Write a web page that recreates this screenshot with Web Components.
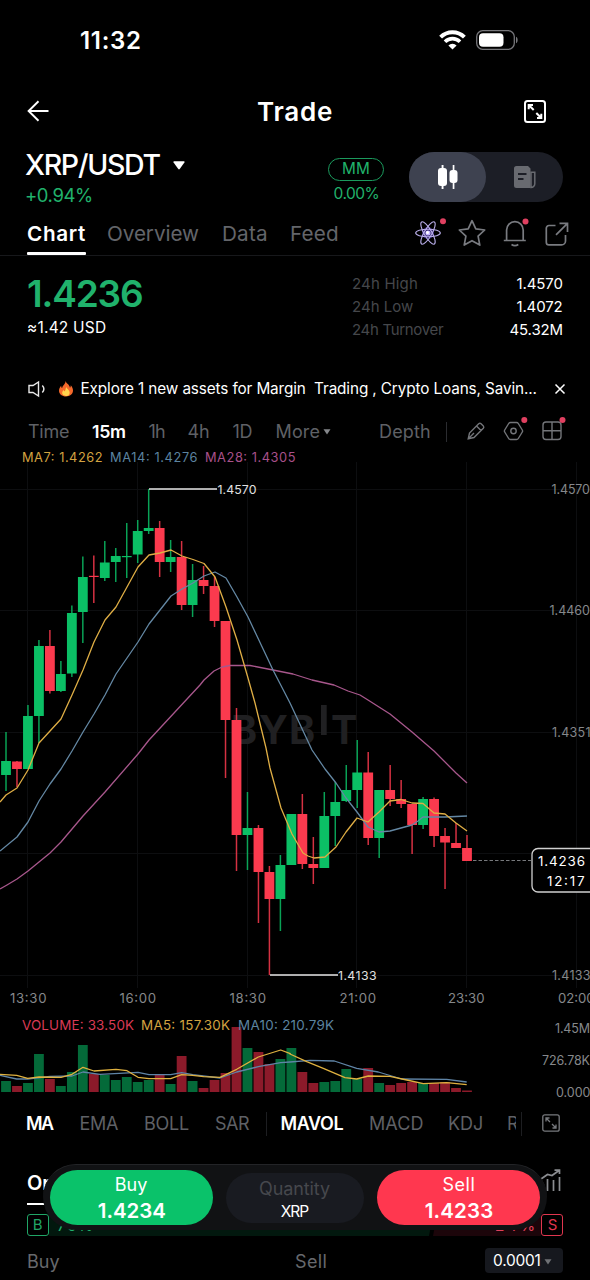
<!DOCTYPE html>
<html lang="en">
<head>
<meta charset="utf-8">
<title>Trade</title>
<style>
html,body{margin:0;background:#000;color:#fff;font-family:Inter,"Liberation Sans",sans-serif;overflow:hidden}
</style>
</head>
<body>
<trade-app></trade-app>
<script>
const BASE = `*{box-sizing:border-box}svg{display:block;flex:none;overflow:visible}
.row{display:flex;align-items:center}.sp{flex:1}`;
function define(name, css, html, after) {
  const t = document.createElement('template');
  t.innerHTML = `<style>${BASE}:host{display:block}${css}</style>${html}`;
  customElements.define(name, class extends HTMLElement {
    connectedCallback() {
      if (this.shadowRoot) return;
      this.attachShadow({mode: 'open'}).append(t.content.cloneNode(true));
      if (after) after(this.shadowRoot, this);
    }
  });
}

/* Label whose glyphs are tracked so that the ink fills the width w; g is the gap before it. */
const pen = document.createElement('canvas').getContext('2d');
customElements.define('ui-text', class extends HTMLElement {
  connectedCallback() {
    if (this.shadowRoot) return;
    const a = (n, d) => this.getAttribute(n) || d;
    const size = a('s', 15), wt = a('wt', 400), w = +a('w', 0), text = this.textContent;
    pen.font = `${wt} ${size}px Inter, "Liberation Sans", sans-serif`;
    const m = pen.measureText(text);
    const ink = m.actualBoundingBoxLeft + m.actualBoundingBoxRight;
    const ls = text.length > 1 ? (w - ink) / (text.length - 1) : 0;
    this.attachShadow({mode: 'open'}).innerHTML =
      `<style>:host{display:block;flex:none;width:${w}px;margin-left:${a('g', 0)}px;color:${a('c', 'inherit')};
      font-size:${size}px;font-weight:${wt};line-height:1.2;white-space:pre}
      span{display:block;width:max-content;margin-left:${m.actualBoundingBoxLeft}px;letter-spacing:${ls}px}</style><span><slot></slot></span>`;
  }
});

define('status-bar', `:host{height:81px}.row{height:81px;padding:0 72px 0 81px}`, `
<div class="row"><ui-text style="padding-top:2px" s="24" wt="600" w="59">11:32</ui-text><span class="sp"></span>
<svg width="27" height="20" viewBox="0 0 27 20" style="margin-right:10px;margin-top:-2px">
<path d="M1.6 7.2a16.8 16.8 0 0 1 23.8 0" fill="none" stroke="#fff" stroke-width="4"/>
<path d="M6 11.7a10.6 10.6 0 0 1 15 0" fill="none" stroke="#fff" stroke-width="3.6"/>
<path d="M9.4 15.4a5.8 5.8 0 0 1 8.2 0L13.5 19.6z" fill="#fff"/></svg>
<svg style="margin-top:-2px" width="42" height="20" viewBox="0 0 42 20"><rect x=".7" y=".7" width="37.6" height="18.6" rx="6" fill="none" stroke="#77777b" stroke-width="1.3"/>
<rect x="3" y="3.2" width="24.500" height="13.600" rx="4" fill="#fff"/><path d="M40 6.700c2.200.8 2.200 5.800 0 6.600z" fill="#77777b"/></svg></div>`);

define('page-header', `.row{height:61px;padding:0 44px 0 27px}`, `
<div class="row"><svg style="margin-top:-1px" width="22" height="22" viewBox="0 0 22 22" fill="none" stroke="#fff" stroke-width="1.900"><path d="M1.500 11H21.500M11.500 1.200 1.600 11l9.900 9.800"/></svg>
<ui-text g="209" s="26" wt="600" w="74">Trade</ui-text><span class="sp"></span>
<svg width="22" height="23" viewBox="0 0 22 23" fill="none" stroke="#fff" stroke-width="2"><rect x="1" y="1" width="20" height="21" rx="2.500"/>
<path d="M4.700 9.300V5h4.300M4.700 5l5 5M17.300 13.700V18H13M17.300 18l-5-5"/></svg></div>`);

define('view-toggle', `:host{width:154px;height:50px;border-radius:25px;background:#1c1e26;display:flex}
div{width:77px;height:50px;display:grid;place-items:center}.on{background:#3e4250;border-radius:25px}`, `
<div class="on"><svg width="20" height="24" viewBox="0 0 20 24" fill="#fff"><rect y="3" width="9" height="18" rx="3"/><rect x="3.600" width="1.900" height="24"/><rect x="11.500" y="5" width="8" height="13" rx="3"/><rect x="14.700" width="1.700" height="24"/></svg></div>
<div><svg width="22" height="22" viewBox="0 0 22 22"><path d="M2.500 0H14l2.500 2.500V22h-14A2.500 2.500 0 0 1 0 19.500v-17A2.500 2.500 0 0 1 2.500 0z" fill="#686a70"/><path d="M4 8h8.500M4 13h5.500" stroke="#1c1e26" stroke-width="1.800"/><path d="M17 6.300h3.800v11.400a3.800 3.800 0 0 1-3.800 3.800z" fill="#1c1e26" stroke="#686a70" stroke-width="1.500"/></svg></div>`);

define('pair-bar', `.bar{height:70px;padding:0 27px 0 25px}.l{width:303px;height:70px;padding-top:7px}
.l .row:first-child{height:32px}.l .row:last-child{height:29px}
.mm{width:56px;height:70px;margin-right:25px;color:#20b26c;padding-top:16px}
.mm ui-text{margin:0 auto}
.pill{width:56px;height:23px;border:1.500px solid #1b9a5d;border-radius:12px;display:flex;align-items:center}`, `
<div class="row bar"><div class="l"><div class="row"><ui-text s="28.500" wt="500" w="135.500">XRP/USDT</ui-text>
<svg style="margin-left:12px" width="12" height="9" viewBox="0 0 12 9"><path d="M1 .3h10q1 .3.4 1.200L6.700 8q-.7.8-1.400 0L.6 1.500Q0 .6 1 .3z" fill="#fff"/></svg></div>
<div class="row"><ui-text g="1" s="18.500" w="66" c="#20b26c">+0.94%</ui-text></div></div>
<div class="mm"><div class="pill"><ui-text s="15.300" w="26">MM</ui-text></div><ui-text style="line-height:25px" s="15.500" w="45">0.00%</ui-text></div>
<view-toggle></view-toggle></div>`);

define('section-tabs', `.row{height:44px;padding-left:28px;border-bottom:1px solid #17181b;color:#63656a}
ui-text{padding-top:2px}
.on{position:relative;color:#fff}.on:after{content:"";position:absolute;left:-1px;right:-1px;top:32px;height:3px;background:#fff;border-radius:1px}
svg{stroke:#797b80;fill:none;stroke-width:1.700}`, `
<div class="row"><div class="on"><ui-text s="20.700" wt="600" w="57">Chart</ui-text></div>
<ui-text g="23" s="20.700" w="91">Overview</ui-text><ui-text g="24" s="20.700" w="44">Data</ui-text><ui-text g="24" s="20.700" w="47">Feed</ui-text>
<svg style="margin-left:77px;margin-top:-1px" width="30" height="30" viewBox="0 0 30 30"><circle cx="13" cy="15" r="6" fill="#5a3fd8" opacity=".45" stroke="none"/><g style="stroke-width:1.100;stroke:#b9aeea"><ellipse cx="13" cy="15" rx="12.300" ry="3.800"/><ellipse cx="13" cy="15" rx="12.800" ry="3.800" transform="rotate(60 13 15)"/><ellipse cx="13" cy="15" rx="12.800" ry="3.800" transform="rotate(120 13 15)"/></g><circle cx="13" cy="15" r="2.600" fill="#c3b5ff" stroke="none"/><circle cx="12.500" cy="14.500" r="1.500" fill="#fff" stroke="none"/><circle cx="28" cy="3.300" r="3" fill="#e04060" stroke="none"/></svg>
<svg style="margin-left:13px;margin-top:-1px" width="28" height="28" viewBox="0 0 28 28"><path d="m14 1.700 3.800 8.200 8.900 1.100-6.600 6.200 1.700 8.900-7.800-4.400-7.800 4.400 1.700-8.900L1.300 11l8.900-1.100z" stroke-linejoin="round"/></svg>
<svg style="margin-left:17px;margin-top:-1px" width="24" height="28" viewBox="0 0 24 28"><path d="M.8 21.500h22M3.600 21.500V11a8.300 8.300 0 0 1 16.600 0v10.500M8.500 25.500q3.400 2.200 6.800 0"/><circle cx="22.500" cy="2.500" r="3" fill="#e04060" stroke="none"/></svg>
<svg style="margin-left:18px" width="24" height="24" viewBox="0 0 24 24"><path d="M10.500 3.500H4A2.700 2.700 0 0 0 1.300 6.200v14A2.700 2.700 0 0 0 4 22.900h12.500a4 4 0 0 0 4-4V13M14.500 1.300h8V10M22.500 1.300 11 12.800"/></svg></div>`);

define('price-summary', `:host{height:110px;display:flex}.l{width:353px;padding:17px 0 0 28px}
.r{width:209.500px;padding-top:16px}.r div{display:flex;justify-content:space-between;height:23.300px;align-items:center;color:#45474b}`, `
<div class="l"><ui-text style="line-height:41px" s="37" wt="600" w="114" c="#20b26c">1.4236</ui-text><ui-text style="line-height:28px" s="15.500" w="78">≈1.42 USD</ui-text></div>
<div class="r"><div><ui-text w="64">24h High</ui-text><ui-text w="46" c="#fff">1.4570</ui-text></div>
<div><ui-text w="60">24h Low</ui-text><ui-text w="46" c="#fff">1.4072</ui-text></div>
<div><ui-text w="91">24h Turnover</ui-text><ui-text w="53" c="#fff">45.32M</ui-text></div></div>`);

define('notice-bar', `.row{height:46px;padding:0 25px 0 28px;margin-bottom:-1px}`, `
<div class="row"><svg width="18" height="16" viewBox="0 0 18 16" fill="none" stroke="#e8e8e8" stroke-width="1.400"><path d="M1 4.500h4L10.500 1v14L5 11.500H1zM14.300 4.500q3.200 3.500 0 7"/></svg>
<svg style="margin-left:13px" width="14" height="15.500" viewBox="0 0 14 17" preserveAspectRatio="none"><path d="M6.500 0c.7 2.700 4.200 4 4.400 7.300.8-.5.900-1.600.8-2.600C13.400 6.500 14 8.700 14 10.500 14 14.500 10.900 17 7 17S0 14.500 0 10.700C0 8.400 1 6.800 2.200 5.300c0 1.200.2 2.100 1 2.500C3.400 4.600 6.600 3.600 6.500 0z" fill="#f4692b"/><path d="M7.200 6.500c.5 2 3 3 3.300 5.200.6 2.700-1.100 4.800-3.500 4.800s-4.300-1.800-3.700-4.300c.3-1 .9-1.700 1.400-2.200.2 1 .6 1.300 1.100 1.300.9-1.500.8-3 1.400-4.800z" fill="#ffd34d"/></svg>
<ui-text g="8.500" s="15.300" w="455">Explore 1 new assets for Margin  Trading , Crypto Loans, Savin...</ui-text><span class="sp"></span>
<svg width="10" height="10" viewBox="0 0 10 10" stroke="#fff" stroke-width="1.500"><path d="m.5.500 9 9m0-9-9 9"/></svg></div>`);

define('interval-bar', `.row{height:41px;padding-left:28px;color:#5f6166}svg{fill:none;stroke:#737579;stroke-width:1.400;margin-top:-1px}i{width:1px;height:20px;background:#2b2c30;margin-left:16px}`, `
<div class="row"><ui-text s="18" w="41">Time</ui-text><ui-text g="23" s="17.800" wt="600" w="33" c="#fff">15m</ui-text><ui-text g="23.500" s="18" w="16.500">1h</ui-text>
<ui-text g="23.500" s="18" w="20.500">4h</ui-text><ui-text g="23.500" s="18" w="19">1D</ui-text><ui-text g="25" s="18" w="43">More</ui-text>
<svg style="margin-left:3px;margin-top:0" width="8" height="6" viewBox="0 0 8 6"><path d="M.5.300h7L4 5.500z" fill="#85878b" stroke="none"/></svg>
<ui-text g="49.500" s="18" w="50">Depth</ui-text><i></i>
<svg style="margin-left:19.500px" width="18" height="18" viewBox="0 0 18 18"><path d="M1.200 16.800 2.500 11 11.700 1.700q1.200-1 2.400 0l2.200 2.200q1 1.200 0 2.400L7 15.500zM9.500 4l4.500 4.500M1.500 16.500 7 11"/></svg>
<svg style="margin-left:18.500px" width="22" height="22" viewBox="0 0 22 22"><path d="M5.700 3.500Q6.300 2.500 7.500 2.500h6q1.200 0 1.800 1l4 6.500q.6 1 0 2l-4 6.500q-.6 1-1.800 1h-6q-1.200 0-1.800-1l-4-6.500q-.6-1 0-2z"/><circle cx="10.500" cy="11" r="2.700"/><circle cx="21.300" cy="0" r="3" fill="#e04060" stroke="none"/></svg>
<svg style="margin-left:17px" width="20" height="20" viewBox="0 0 20 20"><rect x="1" y="1" width="18" height="17.500" rx="3"/><path d="M10 1v17.500M1 9.800h18"/><circle cx="20.500" cy="-1" r="3" fill="#e04060" stroke="none"/></svg></div>`);

/* Per candle: direction, body top, body bottom, wick top, wick bottom, volume top (screen scale) */
const C = [
[1,761,775,732,791,1081],[0,761.5,769,761,787,1086],[1,716,769,705,769,1083],[1,646,716,640,743,1054],[0,646,691,630,693.5,1079],
[1,674,691,661,692,1086],[1,613,673.5,605.5,677,1072],[1,577,612,556.5,643,1045],[0,575.8,577,555.5,603,1074],[1,562.5,578,541,581,1075],
[1,556,562,548,582,1080],[1,556,557.2,523,578,1077],[1,531,554.5,520,563,1082],[1,528,531,489,534,1080],[0,528,562,521,577,1074],
[1,557,562,540,572,1084],[0,557,605,541,610,1056],[1,580,605,564,617,1081],[0,580,586,566,594,1088],[0,586,621,577,627,1080],
[0,621,720,621,778,1073],[0,720,835,708,871,1027],[1,828,835,792,870,1048],[0,828,872,825,923,1052],[0,872,899,866,975,1064],
[1,865,899,855,931,1059],[1,814,865,814,865,1048],[0,814,864,794,869,1072],[0,864,868,837,884,1083],[1,816,868,792,868,1082],
[1,802,816,782,846,1081],[1,790,801,765,802,1069],[1,772.5,790,740,808,1079],[0,772.5,838,752,845,1068],[1,790,838,790,858,1083],
[0,790,799,765,806,1085],[0,799,804,780,808,1083],[0,804,825,804,854,1082],[1,799,825,797,829,1083],[0,799,836,797.5,847,1083],
[0,836,842.5,828,889,1082],[0,843,848,823,848,1088],[0,848,861,835,861,1090.5]];
const MA7='0,802 6,795 17,788 28,770 39,743 50,731 61,719 72,695 83,670 94,642 105,620 116,607 127,587 138,567 149,555 160,553 171,550 182,556 193,559.500 204,563.500 215,577 226,607 237,640 248,678 255,703 266,748 270,768 281,808 292,834 303,853 308,856 314,858 325,857 336,847 346,832 357,818 368,822 379,812 390,801 401,799.500 412,803 423,803.500 434,813 445,814 456,823 467,831';
const MA14='0,851 17,837 28,822 39,801 50,784 61,769 72,751 83,732 94,714 105,695 116,674 138,642 149,624 171,596 182,589 193,583 204,576 215,572 226,578 237,597 248,617 273,670 290,703 312,750 325,769 336,783 346,798 357,812 368,827 379,832 390,831 412,825 418,821 423,817 445,817 467,816';
const MA28='0,889 7,885 17,879 28,871 39,862 50,853 61,842 83,816 105,792 138,754 149,740 200,685 204,680 214,671 222,667 230,665.500 250,665.500 273,670 293,674 312,680 334,685 348,691 360,695 368,700 390,714 412,732 434,751 456,773 467,783';
const z=(dx,s)=>s.split(' ').map(p=>{const[x,y]=p.split(',');return (dx+x/3).toFixed(1)+','+(980+y/3).toFixed(1)}).join(' ');
const V5=z(0,'0,283 50,286 83,295 117,291 183,292 216,283 249,262 282,273 348,268 381,272 414,292 447,296 512,296 545,284 578,286 611,290 660,292 710,268 775,231 842,210 871,221')+' '+z(290,'0,222 50,245 100,265 165,293 200,297 235,288 300,289 350,300 400,311 470,308 530,314');
const V10=z(0,'0,286 50,297 83,297 150,289 216,288 249,276 300,283 414,277 447,284 512,284 545,278 578,284 660,294 710,276 775,260 842,248')+' '+z(290,'0,246 60,241 133,243 200,265 265,276 335,297 470,298 530,306');

define('kline-chart', `:host{height:651px}text{font-family:Inter,"Liberation Sans",sans-serif}`, `<svg width="590" height="651" viewBox="0 452 590 651"></svg>`, root => {
  const G='#0bbf65', R='#fb3a4e';
  const t=(x,cy,s,w,c,str,wt=400)=>`<text x="${x}" y="${cy+s*.364}" font-size="${s}" font-weight="${wt}" fill="${c}" textLength="${w}">${str}</text>`;
  let o='';
  for (const x of [28,138,248,357,467,577]) o+=`<path d="M${x-.5} 462V988" stroke="#0d0e10"/>`;
  for (const y of [489.5,610.5,732.5,853.5,975.5]) o+=`<path d="M0 ${y}H590" stroke="#0d0e10"/>`;
  o+=`<g fill="#202022" font-size="39.500" font-weight="700"><text x="231" y="744">B</text><text x="259" y="744" textLength="28">Y</text><text x="289" y="744">B</text><text x="331" y="744">T</text><path d="M321 705h5.700v30H321z"/></g>`;
  C.forEach(([up,a,b,h,l,v],i)=>{
    const x=6+10.976*i, c=up?G:R;
    o+=`<path d="M${x.toFixed(2)} ${h}V${l}" stroke="${c}" stroke-width="1.500" opacity=".85"/><rect x="${(x-4.900).toFixed(2)}" y="${a}" width="9.800" height="${b-a}" fill="${c}"/>`;
    o+=`<rect x="${(x-4.900).toFixed(2)}" y="${v}" width="9.800" height="${1092-v}" fill="${up?'#046a39':'#8c1a2a'}"/>`;
  });
  const line=(p,c)=>`<polyline points="${p}" fill="none" stroke="${c}" stroke-width="1.300" stroke-linejoin="round"/>`;
  o+=line(MA28,'#a8578c')+line(MA14,'#6488a4')+line(MA7,'#dfae45')+line(V10,'#5f84a6')+line(V5,'#dfb13f');
  o+=`<path d="M149 489H217M270 975H338" stroke="#e6e6e6" stroke-width="1.600"/><path d="M473 860.500H531" stroke="#77797c" stroke-dasharray="3.500 2"/>`;
  o+=t(217.5,489.5,12.3,39,'#e0e0e0','1.4570')+t(338,975.5,12.3,38.5,'#e0e0e0','1.4133');
  const g='#86888b';
  o+=t(551.5,489.500,12.5,38.5,g,'1.4570')+t(549.5,610.700,12.5,40.5,g,'1.4460')+t(552,732.500,12.5,38.5,g,'1.4351')+t(552,975.500,12.5,38.5,g,'1.4133');
  [['13:30',10],['16:00',119.5],['18:30',229.5],['21:00',339.5],['23:30',448],['02:00',558]].forEach(([s,x])=>o+=t(x,997.7,13.2,36.5,g,s));
  o+=t(555,1028.100,12.5,35,g,'1.45M')+t(542,1060,12.5,48,g,'726.78K')+t(556,1092.300,12.5,34.5,g,'0.000');
  o+=t(22,457,12.8,80.5,'#d3a341','MA7: 1.4262')+t(110,457,12.8,87.5,'#5c84a0','MA14: 1.4276')+t(205,457,12.8,90.5,'#a8508a','MA28: 1.4305');
  o+=t(22,1025.300,13.4,112,'#d93a55','VOLUME: 33.50K')+t(141,1025.300,13.4,89,'#d3a341','MA5: 157.30K')+t(238,1025.300,13.4,96,'#5c84a0','MA10: 210.79K');
  o+=`<rect x="532" y="848.500" width="70" height="43.500" rx="6" fill="#000" stroke="#d0d0d0" stroke-width="1.300"/>`;
  o+=t(538,861.500,13.4,47,'#fff','1.4236')+t(547,880.700,13.4,37.500,'#fff','12:17');
  root.querySelector('svg').innerHTML=o;
});

define('indicator-tabs', `.row{height:41px;padding-left:27px;color:#5f6166}i{width:1px;height:24px;background:#1d1e21}.clip{width:8px;overflow:hidden;margin-left:26px}`, `
<div class="row"><ui-text s="18" wt="600" w="27" c="#fff">MA</ui-text><ui-text g="26.500" s="18" w="37.500">EMA</ui-text><ui-text g="27" s="18" w="44">BOLL</ui-text><ui-text g="27" s="18" w="34">SAR</ui-text>
<i style="margin-left:16px"></i><ui-text g="14.500" s="18" wt="600" w="62" c="#fff">MAVOL</ui-text><ui-text g="26.500" s="18" w="52.500">MACD</ui-text><ui-text g="26.500" s="18" w="33">KDJ</ui-text>
<div class="clip"><ui-text s="18" w="28">RSI</ui-text></div><i style="margin-left:5px"></i>
<svg style="margin-left:20px;margin-top:-1px" width="18" height="18" viewBox="0 0 18 18" fill="none" stroke="#77797d" stroke-width="1.300"><rect x=".8" y=".8" width="16.400" height="16.400" rx="2"/><path d="M4 7.500V4h3.500M4 4l4 4M14 10.500V14h-3.500M14 14l-4-4"/></svg></div>`);

define('order-panel', `:host{height:136px;padding:18px 27px 0}
.h{height:41px;justify-content:space-between}.tab{position:relative;width:62px}.tab div{overflow:hidden}.tab:after{content:"";position:absolute;left:0;width:62px;top:32px;height:2.500px;background:#fff}
.d{height:22px;margin-top:11px;}.box{width:22px;height:22px;border:1.500px solid;border-radius:3px;display:grid;place-items:center}
.bar{flex:1;height:22px;display:flex}.b{flex:none;width:384px;background:#02180e;clip-path:polygon(0 0,100% 0,calc(100% - 4px) 100%,0 100%)}.s{flex:1;background:#1c050a;clip-path:polygon(4px 0,100% 0,100% 100%,0 100%)}
.b,.s{display:flex;align-items:center;padding-top:2px}.s{justify-content:flex-end;padding-right:7px}
.f{height:25px;margin-top:12px;color:#67696d}.f>ui-text{padding-top:2px}.pill{width:78px;height:25px;border-radius:4px;background:#16181e;padding:2px 0 0 8px}`, `
<div class="row h"><div class="tab"><div><ui-text g="1" s="20" wt="600" w="108">Order Book</ui-text></div></div><svg width="21" height="22" viewBox="0 0 21 22" fill="none" stroke="#8b8d91" stroke-width="1.700" style="margin-top:-5px;margin-right:2px"><path d="M1 10 7.500 5.500l4.500 1L19 1.500M14.500 1.200H19.500V5M1.500 14v8M7.500 10v12M13.500 11v11M19.500 8v14"/></svg></div>
<div class="row d"><div class="box" style="color:#20a566"><ui-text s="15" w="8.500">B</ui-text></div><div class="bar"><div class="b"><ui-text g="8" s="15.500" w="35" c="#20b26c">76%</ui-text></div><div class="s"><ui-text s="15.500" w="38" c="#e0405a">24%</ui-text></div></div><div class="box" style="color:#e0364f"><ui-text s="15" w="8.500">S</ui-text></div></div>
<div class="row f"><ui-text g="1" s="18" w="31.500">Buy</ui-text><ui-text g="236.500" s="18" w="29.500">Sell</ui-text><span class="sp"></span><div class="row pill"><ui-text s="15.500" w="46.500" c="#fff">0.0001</ui-text><svg style="margin-left:4px" width="8" height="6" viewBox="0 0 8 6"><path d="M.5.300h7L4 5.500z" fill="#6f7175"/></svg></div></div>`);

define('trade-dock', `:host{box-sizing:border-box;position:absolute;left:43px;top:1164px;width:504px;height:66px;border-radius:33px;background:#111214;border-top:1px solid #232427;display:flex;padding:5px 7px;justify-content:space-between}
div{display:flex;flex-direction:column;align-items:center}.a{width:163px;height:55px;border-radius:28px;padding-top:2px}.buy{background:#0ac26a}.sell{background:#ff374f}
.q{width:138px;height:50px;border-radius:25px;background:#191b21;margin-top:3px;padding-top:2px}`, `
<div class="a buy"><ui-text style="line-height:25px" s="18" w="31.500">Buy</ui-text><ui-text style="line-height:27px" s="20.500" wt="600" w="67.500">1.4234</ui-text></div>
<div class="q"><ui-text style="line-height:27px" s="18" w="70" c="#46484d">Quantity</ui-text><ui-text style="line-height:19px" s="15.500" w="28.500">XRP</ui-text></div>
<div class="a sell"><ui-text style="line-height:25px" s="18" w="30">Sell</ui-text><ui-text style="line-height:27px" s="20.500" wt="600" w="67.500">1.4233</ui-text></div>`);

define('trade-app', `:host{position:relative;width:590px;height:1280px;overflow:hidden;background:#000}`, `
<status-bar></status-bar><page-header></page-header><pair-bar></pair-bar><section-tabs></section-tabs><price-summary></price-summary>
<notice-bar></notice-bar><interval-bar></interval-bar><kline-chart></kline-chart><indicator-tabs></indicator-tabs><order-panel></order-panel><trade-dock></trade-dock>`);
</script>
</body>
</html>
